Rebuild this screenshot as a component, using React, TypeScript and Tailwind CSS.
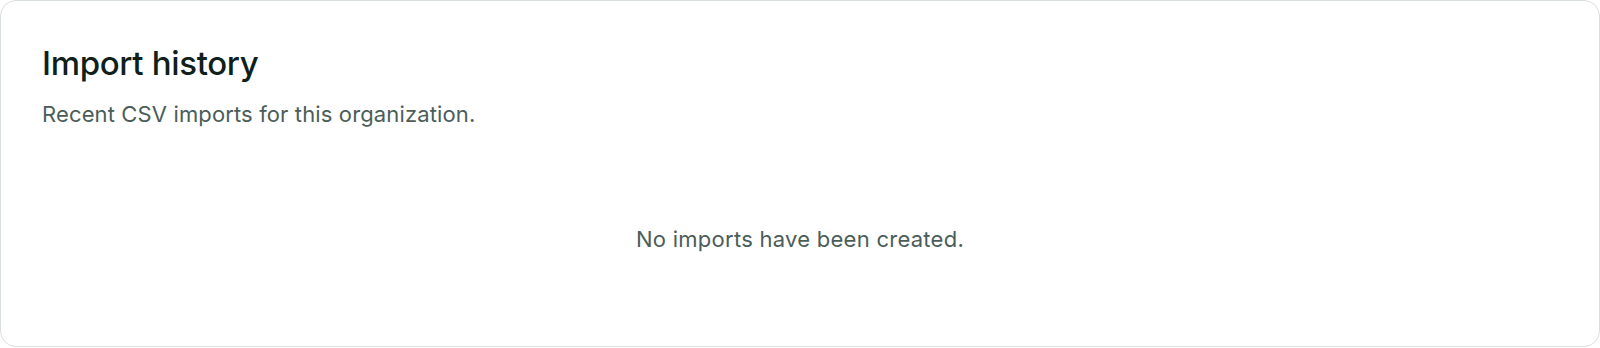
import React from "react";

export default function App() {
  return (
    <div className="w-[1600px] h-[348px] bg-white" style={{ fontFamily: "Inter, 'Noto Sans', sans-serif" }}>
      <div className="h-[347px] rounded-2xl border border-[#d9dfdd] bg-white px-[41px] pt-[42px] flex flex-col">
        <h2 className="text-[33px] leading-[40px] font-medium tracking-[-0.01em] text-[#0f1f1b]">Import history</h2>
        <p className="mt-[17px] text-[22px] leading-[28px] tracking-[0.006em] text-[#4b5d59]">Recent CSV imports for this organization.</p>
        <div className="flex justify-center pt-[97px]">
          <p className="text-[22px] leading-[28px] tracking-[0.012em] text-[#4b5d59]">No imports have been created.</p>
        </div>
      </div>
    </div>
  );
}
